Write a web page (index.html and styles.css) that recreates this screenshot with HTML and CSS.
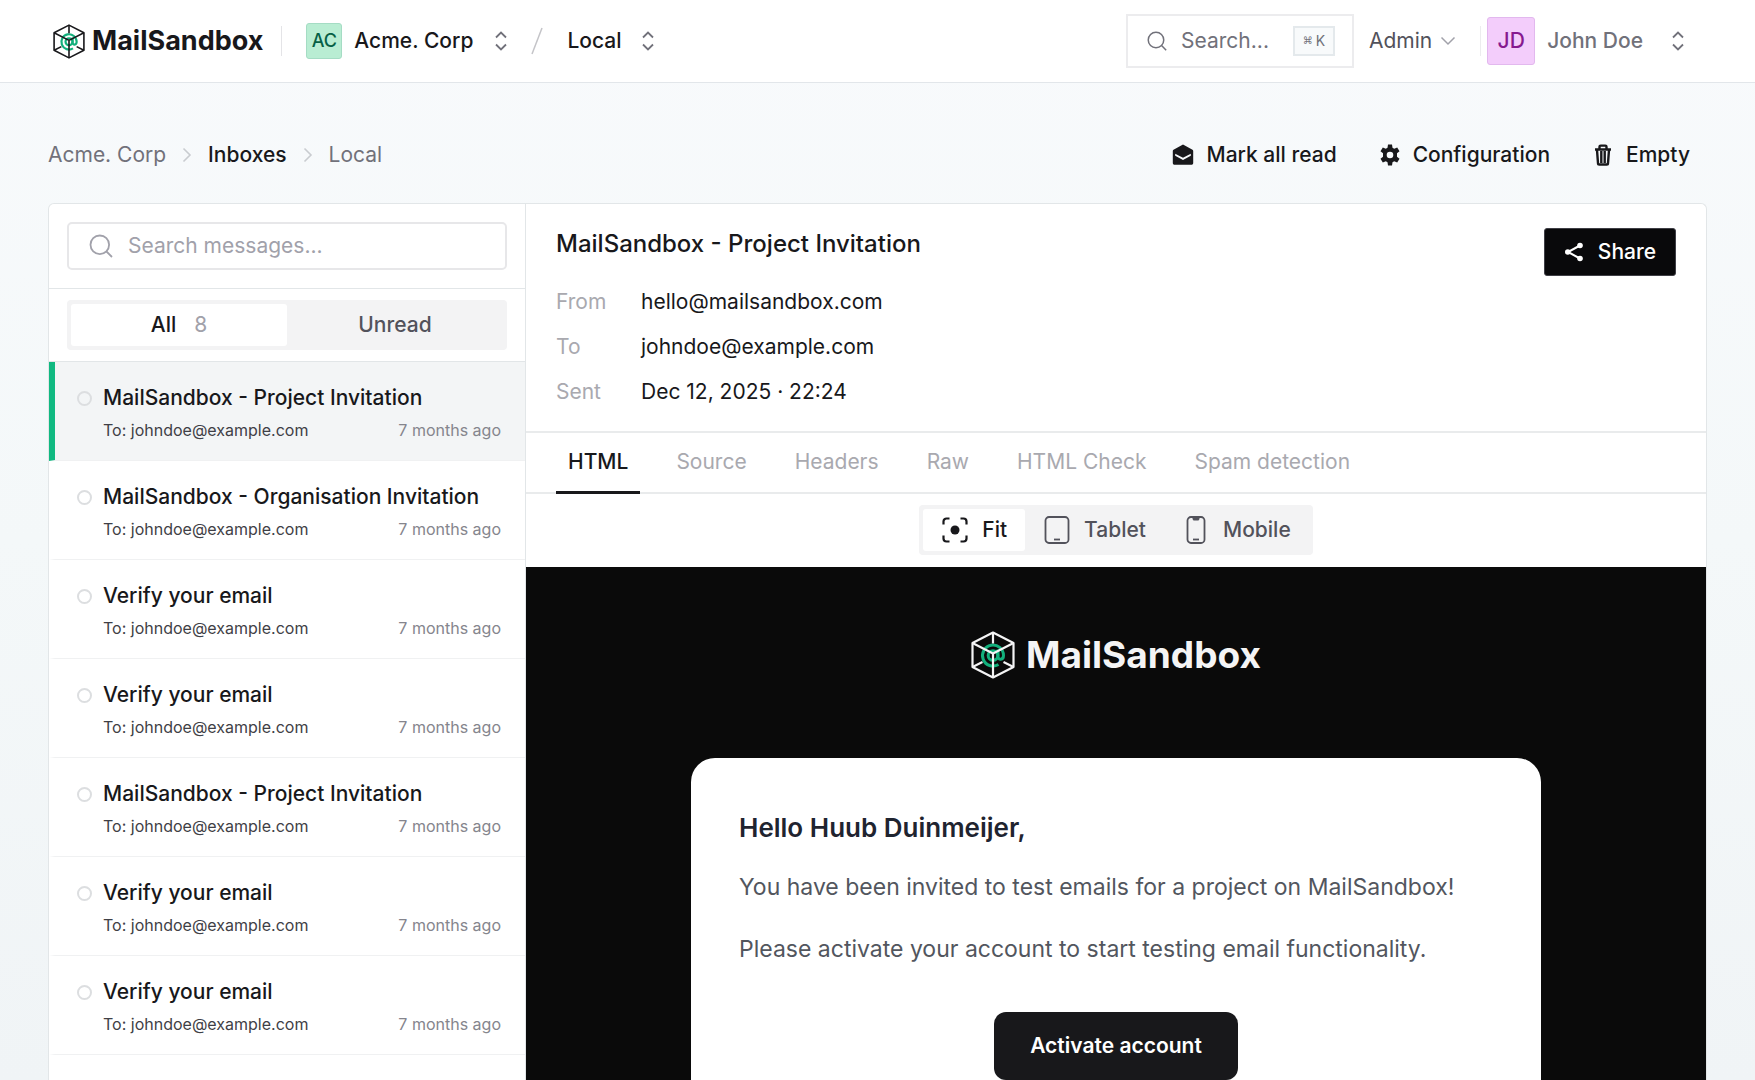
FILE: index.html
```html
<!DOCTYPE html>
<html lang="en">
<head>
    <meta charset="UTF-8">
    <meta name="viewport" content="width=device-width, initial-scale=1.0">
    <title>MailSandbox - Local</title>
    <link rel="stylesheet" href="styles.css">
</head>
<body>
    <!-- Shared icons -->
    <svg class="sprite" aria-hidden="true">
        <symbol id="icon-cube" viewBox="0 0 44 48">
            <g fill="none" stroke="#12b07c" stroke-width="3">
                <circle cx="22" cy="24.500" r="4.800"/>
                <path d="M27 18.500v7c0 4 5.500 3.600 5.500-1A10.500 10.500 0 1 0 27.500 33.500"/>
            </g>
            <g fill="none" stroke="currentColor" stroke-width="2.200" stroke-linejoin="round">
                <path d="M22 1.500L42.500 12v24L22 46.500 1.500 36V12z"/>
                <path d="M1.500 12L22 22.500 42.500 12M22 22.500v24M22 1.500v11M1.500 36l10-5M42.500 36l-10-5"/>
            </g>
        </symbol>
        <symbol id="icon-updown" viewBox="0 0 12 20">
            <path d="M1 6.500l5-5 5 5M1 13.500l5 5 5-5" fill="none" stroke="currentColor" stroke-width="1.800"/>
        </symbol>
        <symbol id="icon-right" viewBox="0 0 10 16">
            <path d="M1.500 1.500L8 8l-6.500 6.500" fill="none" stroke="currentColor" stroke-width="1.600"/>
        </symbol>
        <symbol id="icon-search" viewBox="0 0 24 24">
            <path d="M10.800 1.500a9.300 9.300 0 1 0 0 18.600 9.300 9.300 0 0 0 0-18.600zM17.500 17.500L23 23" fill="none" stroke="currentColor" stroke-width="1.800"/>
        </symbol>
    </svg>

    <header class="topbar">
        <a href="#" class="logo">
            <svg class="logo-icon"><use href="#icon-cube"/></svg>
            <span>MailSandbox</span>
        </a>
        <button class="switcher org-switcher">
            <span class="badge badge-org">AC</span>
            <span>Acme. Corp</span>
            <svg class="updown"><use href="#icon-updown"/></svg>
        </button>
        <svg class="slash" viewBox="0 0 12 28"><path d="M1 27L11 1" stroke="currentColor" stroke-width="1.500"/></svg>
        <button class="switcher">
            <span>Local</span>
            <svg class="updown"><use href="#icon-updown"/></svg>
        </button>

        <div class="topbar-right">
            <button class="search-button">
                <svg class="search-icon"><use href="#icon-search"/></svg>
                <span>Search...</span>
                <kbd><small>⌘</small>K</kbd>
            </button>
            <button class="admin-menu">
                Admin
                <svg class="down" viewBox="0 0 16 10"><path d="M1.500 1.500L8 8l6.500-6.500" fill="none" stroke="currentColor" stroke-width="1.500"/></svg>
            </button>
            <button class="user-menu">
                <span class="badge badge-user">JD</span>
                <span>John Doe</span>
                <svg class="updown"><use href="#icon-updown"/></svg>
            </button>
        </div>
    </header>

    <main class="page">
        <div class="page-head">
            <nav class="breadcrumb">
                <a href="#">Acme. Corp</a>
                <svg><use href="#icon-right"/></svg>
                <a href="#" class="active">Inboxes</a>
                <svg><use href="#icon-right"/></svg>
                <a href="#">Local</a>
            </nav>
            <div class="actions">
                <button>
                    <svg viewBox="0 0 22 22"><path fill="currentColor" fill-rule="evenodd" d="M11 .5l9.500 5.200c.4.300.7.800.7 1.300v12c0 1-.8 1.800-1.800 1.800H2.600c-1 0-1.800-.8-1.800-1.800V7c0-.5.3-1 .7-1.300zM3.200 9.800v1.900l7.800 4.200 7.800-4.200V9.800L11 13.700z"/></svg>
                    Mark all read
                </button>
                <button>
                    <svg viewBox="0 0 22 22"><path fill="currentColor" fill-rule="evenodd" d="M9 .5h4l.5 3.200 1.700 1 3-1.200 2.300 3.800-2.500 2v3.400l2.500 2-2.300 3.800-3-1.200-1.700 1-.5 3.200H9l-.5-3.200-1.700-1-3 1.200-2.300-3.800 2.500-2V9.300l-2.500-2 2.300-3.800 3 1.200 1.700-1zM11 7.700a3.300 3.300 0 1 0 0 6.600 3.300 3.300 0 0 0 0-6.600z"/></svg>
                    Configuration
                </button>
                <button>
                    <svg viewBox="0 0 22 22"><path fill="none" stroke="currentColor" stroke-width="2.400" d="M3 5.500h16M7.500 5V2.800c0-.7.500-1.200 1.200-1.200h4.600c.7 0 1.200.5 1.200 1.200V5M5 6l1 13.200c0 .8.600 1.300 1.300 1.300h7.400c.7 0 1.300-.5 1.300-1.300L17 6M9.300 7v12M12.700 7v12"/></svg>
                    Empty
                </button>
            </div>
        </div>

        <div class="panel">
            <!-- Message list -->
            <aside class="sidebar">
                <div class="search-box">
                    <svg><use href="#icon-search"/></svg>
                    <input type="text" placeholder="Search messages..." aria-label="Search messages">
                </div>
                <div class="filter">
                    <div class="segmented">
                        <button class="active">All <span class="count">8</span></button>
                        <button>Unread</button>
                    </div>
                </div>
                <ul class="messages">
                    <li class="message active">
                        <a href="#">
                            <span class="dot"></span>
                            <span class="subject">MailSandbox - Project Invitation</span>
                            <span class="to">To: johndoe@example.com</span>
                            <span class="time">7 months ago</span>
                        </a>
                    </li>
                    <li class="message">
                        <a href="#">
                            <span class="dot"></span>
                            <span class="subject">MailSandbox - Organisation Invitation</span>
                            <span class="to">To: johndoe@example.com</span>
                            <span class="time">7 months ago</span>
                        </a>
                    </li>
                    <li class="message">
                        <a href="#">
                            <span class="dot"></span>
                            <span class="subject">Verify your email</span>
                            <span class="to">To: johndoe@example.com</span>
                            <span class="time">7 months ago</span>
                        </a>
                    </li>
                    <li class="message">
                        <a href="#">
                            <span class="dot"></span>
                            <span class="subject">Verify your email</span>
                            <span class="to">To: johndoe@example.com</span>
                            <span class="time">7 months ago</span>
                        </a>
                    </li>
                    <li class="message">
                        <a href="#">
                            <span class="dot"></span>
                            <span class="subject">MailSandbox - Project Invitation</span>
                            <span class="to">To: johndoe@example.com</span>
                            <span class="time">7 months ago</span>
                        </a>
                    </li>
                    <li class="message">
                        <a href="#">
                            <span class="dot"></span>
                            <span class="subject">Verify your email</span>
                            <span class="to">To: johndoe@example.com</span>
                            <span class="time">7 months ago</span>
                        </a>
                    </li>
                    <li class="message">
                        <a href="#">
                            <span class="dot"></span>
                            <span class="subject">Verify your email</span>
                            <span class="to">To: johndoe@example.com</span>
                            <span class="time">7 months ago</span>
                        </a>
                    </li>
                </ul>
            </aside>

            <!-- Opened message -->
            <section class="detail">
                <div class="detail-head">
                    <div>
                        <h1>MailSandbox - Project Invitation</h1>
                        <dl class="meta">
                            <dt>From</dt>
                            <dd>hello@mailsandbox.com</dd>
                            <dt>To</dt>
                            <dd>johndoe@example.com</dd>
                            <dt>Sent</dt>
                            <dd>Dec 12, 2025 · 22:24</dd>
                        </dl>
                    </div>
                    <button class="share">
                        <svg viewBox="0 0 20 20"><path d="M16 3.500L4 10l12 6.500" fill="none" stroke="currentColor" stroke-width="2"/><g fill="currentColor"><circle cx="16" cy="3.500" r="2.800"/><circle cx="3.800" cy="10" r="2.800"/><circle cx="16" cy="16.500" r="2.800"/></g></svg>
                        Share
                    </button>
                </div>
                <nav class="tabs">
                    <a href="#" class="active">HTML</a>
                    <a href="#">Source</a>
                    <a href="#">Headers</a>
                    <a href="#">Raw</a>
                    <a href="#">HTML Check</a>
                    <a href="#">Spam detection</a>
                </nav>
                <div class="devices">
                    <div class="segmented">
                        <button class="active">
                            <svg viewBox="0 0 28 28"><path d="M2.500 8.500V5.500a3 3 0 0 1 3-3h3M19.500 2.500h3a3 3 0 0 1 3 3v3M25.500 19.500v3a3 3 0 0 1-3 3h-3M8.500 25.500h-3a3 3 0 0 1-3-3v-3" fill="none" stroke="currentColor" stroke-width="2.200"/><circle cx="14" cy="14" r="4.500" fill="currentColor"/></svg>
                            Fit
                        </button>
                        <button>
                            <svg viewBox="0 0 28 28"><rect x="2.500" y="1" width="23" height="26" rx="3.500" fill="none" stroke="currentColor" stroke-width="1.800"/><path d="M11 23.500h6" stroke="currentColor" stroke-width="1.800"/></svg>
                            Tablet
                        </button>
                        <button>
                            <svg viewBox="0 0 28 28"><rect x="5.500" y="1" width="17" height="26" rx="3.500" fill="none" stroke="currentColor" stroke-width="1.800"/><path d="M11 23.500h6" stroke="currentColor" stroke-width="1.800"/><path d="M10.500 1.500h7v1.500l-1 1.500h-5l-1-1.500z" fill="currentColor"/></svg>
                            Mobile
                        </button>
                    </div>
                </div>
                <div class="preview">
                    <div class="mail-logo">
                        <svg><use href="#icon-cube"/></svg>
                        <span>MailSandbox</span>
                    </div>
                    <article class="mail">
                        <h2>Hello Huub Duinmeijer,</h2>
                        <p>You have been invited to test emails for a project on MailSandbox!</p>
                        <p>Please activate your account to start testing email functionality.</p>
                        <a href="#" class="activate">Activate account</a>
                    </article>
                </div>
            </section>
        </div>
    </main>
</body>
</html>
```
FILE: styles.css
```css
* {
    box-sizing: border-box;
}
body {
    display: flex;
    flex-direction: column;
    height: 100vh;
    margin: 0;
    overflow: hidden;
    background: linear-gradient(#f8fafc, #f4f8f9 50%, #f0f4f6);
    color: #18181b;
    font-family: Inter, sans-serif;
    font-size: 21px;
    line-height: 28px;
}
a {
    color: inherit;
    text-decoration: none;
}
button {
    display: flex;
    align-items: center;
    padding: 0;
    border: none;
    background: none;
    color: inherit;
    font: inherit;
    font-weight: 500;
    cursor: pointer;
}
svg {
    flex: none;
}
.sprite {
    display: none;
}

/* Top bar */
.topbar {
    display: flex;
    flex: none;
    align-items: center;
    height: 83px;
    padding: 0 71px 0 53px;
    border-bottom: 1px solid #e2e6ea;
    background-color: #fff;
}
.logo {
    display: flex;
    align-items: center;
    gap: 7px;
    font-size: 27px;
    font-weight: 700;
}
.logo-icon {
    width: 32px;
    height: 35px;
}
.switcher {
    gap: 20px;
}
.updown {
    width: 12px;
    height: 20px;
    color: #71717a;
}
.org-switcher {
    gap: 12px;
    height: 30px;
    margin-left: 18px;
    padding-left: 24px;
    border-left: 1px solid #e4e4e7;
}
.org-switcher .updown {
    margin-left: 10px;
}
.slash {
    width: 12px;
    height: 28px;
    margin: 0 24px;
    color: #c4c4c8;
}
.badge {
    display: flex;
    align-items: center;
    justify-content: center;
    border-radius: 3px;
}
.badge-org {
    width: 36px;
    height: 36px;
    border: 1px solid #a5dcc4;
    background-color: #b9edd3;
    color: #065f46;
    font-size: 18px;
}
.badge-user {
    width: 48px;
    height: 48px;
    border: 1px solid #e2b8ee;
    background-color: #f3cdfb;
    color: #86198f;
}
.topbar-right {
    display: flex;
    align-items: center;
    margin-left: auto;
}
.search-button {
    height: 54px;
    padding: 0 17px 0 19px;
    border: 2px solid #ececee;
    color: #71717a;
    font-weight: 400;
}
.search-icon {
    width: 20px;
    height: 20px;
    margin-right: 14px;
}
.search-button kbd {
    display: flex;
    align-items: center;
    justify-content: center;
    gap: 3px;
    width: 42px;
    height: 30px;
    margin-left: 24px;
    border: 2px solid #e4e9ec;
    background-color: #f8fafb;
    font-family: inherit;
    font-size: 14px;
}
.search-button small {
    font-family: "DejaVu Sans", sans-serif;
    font-size: 10px;
}
.admin-menu {
    gap: 8px;
    height: 30px;
    margin-left: 15px;
    padding-right: 24px;
    border-right: 1px solid #ececee;
    color: #52525b;
    font-weight: 400;
}
.down {
    width: 16px;
    height: 10px;
    color: #a1a1aa;
}
.user-menu {
    gap: 12px;
    margin-left: 6px;
    color: #71717a;
}
.user-menu .updown {
    margin-left: 17px;
}

/* Page */
.page {
    display: flex;
    flex: 1;
    flex-direction: column;
    min-height: 0;
    padding: 48px 48px 0;
}
.page-head {
    display: flex;
    flex: none;
    align-items: center;
    justify-content: space-between;
    height: 48px;
    margin-bottom: 24px;
    padding-right: 17px;
}
.breadcrumb {
    display: flex;
    align-items: center;
    gap: 16px;
    color: #71717a;
}
.breadcrumb svg {
    width: 10px;
    height: 16px;
    color: #c9ccd0;
}
.breadcrumb .active {
    color: #18181b;
    font-weight: 500;
}
.actions {
    display: flex;
    gap: 42px;
}
.actions button {
    gap: 12px;
}
.actions svg {
    width: 22px;
    height: 22px;
}
.panel {
    display: grid;
    flex: 1;
    grid-template-columns: 477px 1fr;
    min-height: 0;
    border: 1px solid #e2e6e8;
    border-bottom: none;
    border-radius: 6px 6px 0 0;
    background-color: #fff;
}

/* Sidebar */
.sidebar {
    min-height: 0;
    overflow: hidden;
    border-right: 1px solid #e2e6e8;
}
.search-box {
    display: flex;
    align-items: center;
    height: 48px;
    margin: 18px;
    padding-left: 20px;
    border: 2px solid #e7e7e9;
    border-radius: 5px;
    color: #a1a1aa;
}
.search-box svg {
    width: 24px;
    height: 24px;
    margin-right: 15px;
}
.search-box input {
    flex: 1;
    min-width: 0;
    padding: 0;
    border: none;
    outline: none;
    background: none;
    font: inherit;
}
.search-box input::placeholder {
    color: #a1a1aa;
}
.filter {
    padding: 11px 18px;
    border-top: 1px solid #e2e6e8;
    border-bottom: 1px solid #e2e6e8;
}
.segmented {
    display: flex;
    padding: 4px;
    border-radius: 4px;
    background-color: #f3f3f4;
    color: #52525b;
}
.segmented button {
    height: 42px;
    border-radius: 3px;
}
.segmented .active {
    background-color: #fff;
    color: #18181b;
}
.filter .segmented button {
    flex: 1;
    justify-content: center;
    gap: 18px;
}
.count {
    color: #a1a1aa;
    font-weight: 400;
}
.messages {
    margin: 0;
    padding: 0;
    list-style: none;
}
.message {
    border-bottom: 1px solid #f0f1f2;
    border-left: 6px solid transparent;
}
.message.active {
    border-left-color: #10b981;
    background-color: #f3f5f6;
}
.message a {
    display: grid;
    grid-template-columns: 15px 1fr auto;
    align-items: center;
    gap: 6px 11px;
    padding: 22px 24px 18px 22px;
}
.dot {
    width: 15px;
    height: 15px;
    border: 2px solid #dcdee0;
    border-radius: 50%;
}
.subject {
    grid-column: 2 / 4;
    font-weight: 500;
}
.to {
    grid-column: 2;
    color: #3f3f46;
    font-size: 16px;
    line-height: 24px;
}
.time {
    color: #85858d;
    font-size: 16px;
    line-height: 24px;
}

/* Detail */
.detail {
    display: flex;
    flex-direction: column;
    min-width: 0;
    min-height: 0;
}
.detail-head {
    display: flex;
    align-items: flex-start;
    justify-content: space-between;
    padding: 24px 30px 25px;
    border-bottom: 2px solid #e9ebec;
}
h1 {
    margin: 0 0 28px;
    font-size: 24px;
    font-weight: 500;
    line-height: 32px;
}
.meta {
    display: grid;
    grid-template-columns: 85px auto;
    row-gap: 17px;
    margin: 0;
}
.meta dt {
    color: #a9a9af;
}
.meta dd {
    margin: 0;
}
.share {
    gap: 14px;
    height: 48px;
    padding: 0 19px;
    border: 1px solid #3f3f46;
    border-radius: 3px;
    background-color: #09090b;
    color: #fff;
}
.share svg {
    width: 20px;
    height: 20px;
}
.tabs {
    display: flex;
    gap: 24px;
    height: 61px;
    padding: 0 30px;
    border-bottom: 2px solid #e9ebec;
    color: #a9a9af;
}
.tabs a {
    height: 61px;
    padding: 15px 12px 0;
}
.tabs .active {
    border-bottom: 3px solid #18181b;
    color: #18181b;
    font-weight: 500;
}
.devices {
    display: flex;
    justify-content: center;
    padding: 11px 0 12px;
}
.devices button {
    gap: 13px;
    padding: 0 18px;
}
.devices svg {
    width: 28px;
    height: 28px;
}
.preview {
    flex: 1;
    min-height: 0;
    overflow: hidden;
    padding: 64px 165px 0;
    background-color: #0a0a0a;
}
.mail-logo {
    display: flex;
    align-items: center;
    justify-content: center;
    gap: 11px;
    color: #f4f4f5;
    font-size: 37px;
    font-weight: 700;
    line-height: 48px;
}
.mail-logo svg {
    width: 44px;
    height: 48px;
}
.mail {
    display: flex;
    flex-direction: column;
    min-height: 400px;
    margin-top: 79px;
    padding: 48px;
    border-radius: 24px;
    background-color: #fff;
    color: #52565e;
    font-size: 23px;
    line-height: 38px;
}
.mail h2 {
    margin: 0 0 18px;
    color: #1f2430;
    font-size: 26px;
    font-weight: 600;
    line-height: 44px;
}
.mail p {
    margin: 0 0 24px;
}
.activate {
    align-self: center;
    margin-top: 20px;
    padding: 20px 36px;
    border-radius: 12px;
    background-color: #18181b;
    color: #fff;
    font-size: 21px;
    font-weight: 600;
    line-height: 28px;
}
```
